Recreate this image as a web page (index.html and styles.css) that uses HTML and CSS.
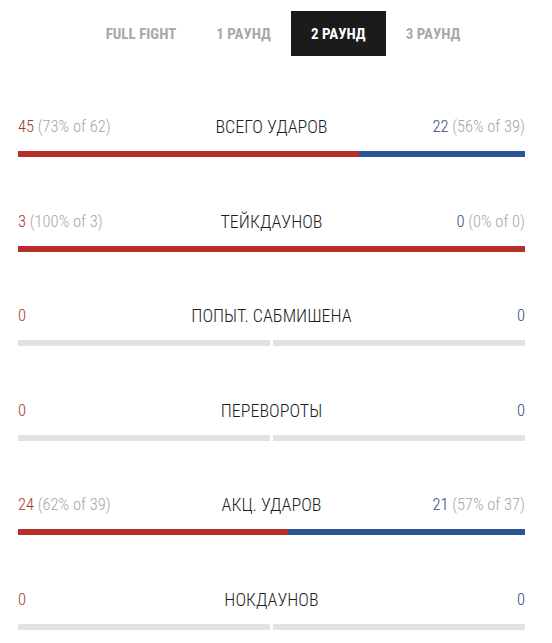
FILE: index.html
```html
<!DOCTYPE html>
<html>
  <head>
    <title>Статистика боя</title>
    <link rel="stylesheet" href="styles.css">
  </head>
  <body>
    <div class="tabs">
      <button class="tab">FULL FIGHT</button>
      <button class="tab">1 РАУНД</button>
      <button class="tab active">2 РАУНД</button>
      <button class="tab">3 РАУНД</button>
    </div>
    <div class="stats">
      <div class="stat">
        <div class="stat-head">
          <span class="val red">45 <span class="muted">(73% of 62)</span></span>
          <span class="label">ВСЕГО УДАРОВ</span>
          <span class="val blue">22 <span class="muted">(56% of 39)</span></span>
        </div>
        <div class="bar"><div class="fill-red" style="width: 67.2%"></div><div class="fill-blue"></div></div>
      </div>
      <div class="stat">
        <div class="stat-head">
          <span class="val red">3 <span class="muted">(100% of 3)</span></span>
          <span class="label">ТЕЙКДАУНОВ</span>
          <span class="val blue">0 <span class="muted">(0% of 0)</span></span>
        </div>
        <div class="bar"><div class="fill-red" style="width: 100%"></div><div class="fill-blue"></div></div>
      </div>
      <div class="stat">
        <div class="stat-head">
          <span class="val red">0</span>
          <span class="label">ПОПЫТ. САБМИШЕНА</span>
          <span class="val blue">0</span>
        </div>
        <div class="bar empty"><div class="half"></div><div class="half"></div></div>
      </div>
      <div class="stat">
        <div class="stat-head">
          <span class="val red">0</span>
          <span class="label">ПЕРЕВОРОТЫ</span>
          <span class="val blue">0</span>
        </div>
        <div class="bar empty"><div class="half"></div><div class="half"></div></div>
      </div>
      <div class="stat">
        <div class="stat-head">
          <span class="val red">24 <span class="muted">(62% of 39)</span></span>
          <span class="label">АКЦ. УДАРОВ</span>
          <span class="val blue">21 <span class="muted">(57% of 37)</span></span>
        </div>
        <div class="bar"><div class="fill-red" style="width: 53.3%"></div><div class="fill-blue"></div></div>
      </div>
      <div class="stat">
        <div class="stat-head">
          <span class="val red">0</span>
          <span class="label">НОКДАУНОВ</span>
          <span class="val blue">0</span>
        </div>
        <div class="bar empty"><div class="half"></div><div class="half"></div></div>
      </div>
    </div>
  </body>
</html>
```

FILE: styles.css
```css
body {
  margin: 0;
  background-color: #fff;
  font-family: "Roboto Condensed", "Liberation Sans Narrow", Roboto, sans-serif;
}

.tabs {
  display: flex;
  justify-content: center;
  margin-top: 11px;
  padding-left: 14px;
}

.tab {
  height: 45px;
  padding: 0 20px;
  border: none;
  background: none;
  color: #a8a8a8;
  font-family: "Roboto Condensed", "Liberation Sans Narrow", Roboto, sans-serif;
  font-size: 15px;
  font-weight: bold;
  cursor: pointer;
}

.tab.active {
  background-color: #1b1b1b;
  color: #fff;
}

.stats {
  margin-top: 60px;
  padding: 0 27px 0 18px;
}

.stat {
  margin-bottom: 53.5px;
}

.stat:last-child {
  margin-bottom: 0;
}

.stat-head {
  display: grid;
  grid-template-columns: 1fr auto 1fr;
  align-items: center;
  height: 20px;
}

.val {
  font-size: 16.5px;
  font-weight: 300;
}

.val.red {
  color: #a8362f;
}

.val.blue {
  color: #2e4a7a;
  text-align: right;
}

.muted {
  color: #a6a6a6;
}

.label {
  color: #1e1e1e;
  font-size: 18px;
  font-weight: 300;
  text-transform: uppercase;
}

.bar {
  display: flex;
  height: 6px;
  margin-top: 15px;
}

.fill-red {
  background-color: #b5302a;
}

.fill-blue {
  flex: 1;
  background-color: #2d5394;
}

.bar.empty {
  gap: 3px;
}

.half {
  flex: 1;
  background-color: #e2e2e2;
}
```
